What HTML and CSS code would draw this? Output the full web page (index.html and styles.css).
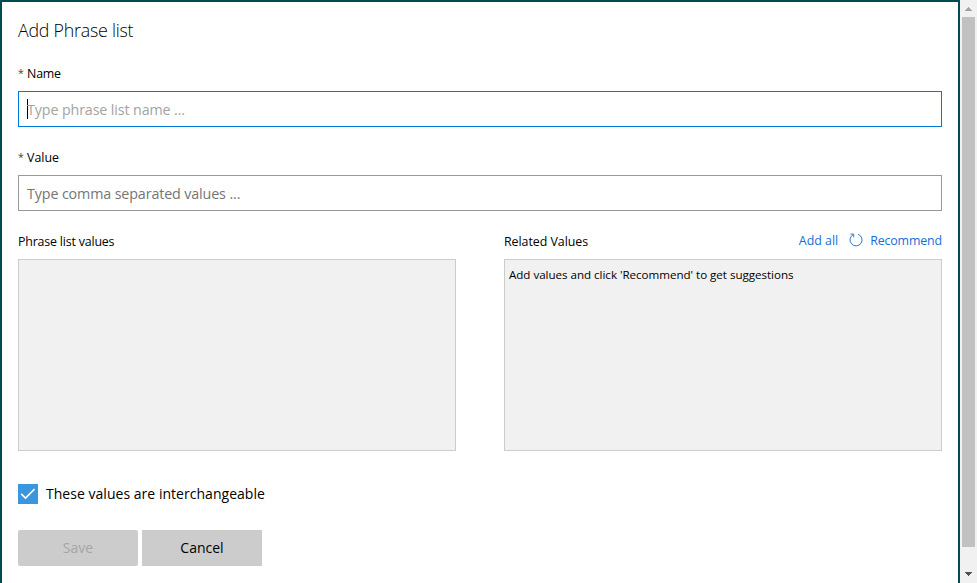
FILE: index.html
```html
<!DOCTYPE html>
<html lang="en">
<head>
<meta charset="utf-8">
<title>Add Phrase list</title>
<link rel="stylesheet" href="styles.css">
</head>
<body>
<main class="dialog">
  <h1 class="title"><span>Add Phrase list</span></h1>
  <label class="label"><span class="star">*</span><span class="name-text">Name</span></label>
  <div class="field focused"><span class="caret"></span><span class="ph-name">Type phrase list name ...</span></div>
  <label class="label"><span class="star">*</span><span class="value-text">Value</span></label>
  <div class="field"><span class="ph-value">Type comma separated values ...</span></div>
  <div class="columns">
    <section>
      <div class="head"><span class="plv">Phrase list values</span></div>
      <div class="box"></div>
    </section>
    <section>
      <div class="head">
        <span class="related">Related Values</span>
        <div class="links">
          <a class="add-all">Add all</a>
          <svg class="refresh" viewBox="0 0 14 14"><path d="M9.2 1.3A6 6 0 1 1 4.2 1.6M1.5 1.1h3.2v3.2" /></svg>
          <a class="recommend">Recommend</a>
        </div>
      </div>
      <div class="box"><span class="hint">Add values and click 'Recommend' to get suggestions</span></div>
    </section>
  </div>
  <div class="check-row">
    <span class="check"><svg viewBox="0 0 20 20"><path d="M3.2 9.9l4.3 4.2 9-9" /></svg></span>
    <span class="inter">These values are interchangeable</span>
  </div>
  <div class="actions">
    <button class="save" disabled><span>Save</span></button>
    <button class="cancel"><span>Cancel</span></button>
  </div>
</main>
<aside class="scrollbar">
  <svg class="arrow up" viewBox="0 0 17 17"><path d="M8 7h1v1h1v1h1v1h1v1H5v-1h1V9h1V8h1z" /></svg>
  <div class="thumb"></div>
  <svg class="arrow" viewBox="0 0 17 17"><path d="M5 6h7v1h-1v1h-1v1H9v1H8V9H7V8H6V7H5z" /></svg>
</aside>
</body>
</html>
```
FILE: styles.css
```css
* { box-sizing: border-box; }
body {
  margin: 0;
  height: 583px;
  display: flex;
  overflow: hidden;
  background: #fff;
  color: #000;
  font: 12.4px/18px "Open Sans", "Noto Sans", sans-serif;
  white-space: nowrap;
}
.dialog {
  width: 960px;
  height: 583px;
  padding: 15px 16px 0;
  border: 2px solid #004b50;
  border-bottom: 0;
}
.title { margin: 0; height: 48px; font-size: 17.8px; font-weight: 300; line-height: 26px; letter-spacing: -.22px; color: #000; }
.label { display: flex; height: 26px; }
.star { width: 9px; margin-top: -1px; font-size: 10.5px; color: #444; }
.name-text { letter-spacing: -.2px; }
.field {
  display: flex;
  align-items: center;
  height: 36px;
  margin-bottom: 22px;
  padding: 2px 8px 0;
  border: 1px solid #999;
  color: #757575;
  font-size: 14.3px;
}
.field.focused { border-color: #0078d7; color: #a3a3a3; }
.caret { width: 1px; height: 20px; margin: -2px -1px 0 0; background: #000; }
.ph-name, .ph-value { letter-spacing: -.13px; }
.columns { display: grid; grid-template-columns: 438px 438px; gap: 48px; }
.head { display: flex; justify-content: space-between; height: 26px; }
.plv { letter-spacing: -.18px; }
.related { letter-spacing: -.04px; }
.links { display: flex; margin-top: -1px; color: #0f6fdd; }
.recommend { letter-spacing: -.14px; }
.refresh { width: 14px; height: 14px; margin: 1px 7px 0 11px; fill: none; stroke: #2c78d0; }
.box { height: 192px; padding: 6px 4px; border: 1px solid #ccc; background: #f1f1f1; font-size: 11.6px; letter-spacing: -.03px; }
.check-row { display: flex; align-items: center; height: 20px; margin-top: 33px; font-size: 14px; letter-spacing: .03px; }
.check { width: 20px; height: 20px; margin-right: 8px; background: #3a96dd; }
.check svg { display: block; fill: none; stroke: #fff; stroke-width: 1.5; }
.actions { display: flex; gap: 4px; margin-top: 26px; }
button { width: 120px; height: 36px; padding: 0; border: 0; background: #ccc; color: #000; font: 14px/20px "Open Sans", sans-serif; }
.save { border-radius: 2px; color: #a6a6a6; }
.scrollbar { display: flex; flex-direction: column; width: 17px; height: 583px; background: #f1f1f1; }
.thumb { width: 13px; height: 530px; margin: 0 2px 2px; background: #c1c1c1; }
.arrow { width: 17px; height: 17px; fill: #505050; shape-rendering: crispEdges; }
.scrollbar .arrow:last-child { margin-top: 17px; }
.arrow.up { fill: #a3a3a3; }
```
